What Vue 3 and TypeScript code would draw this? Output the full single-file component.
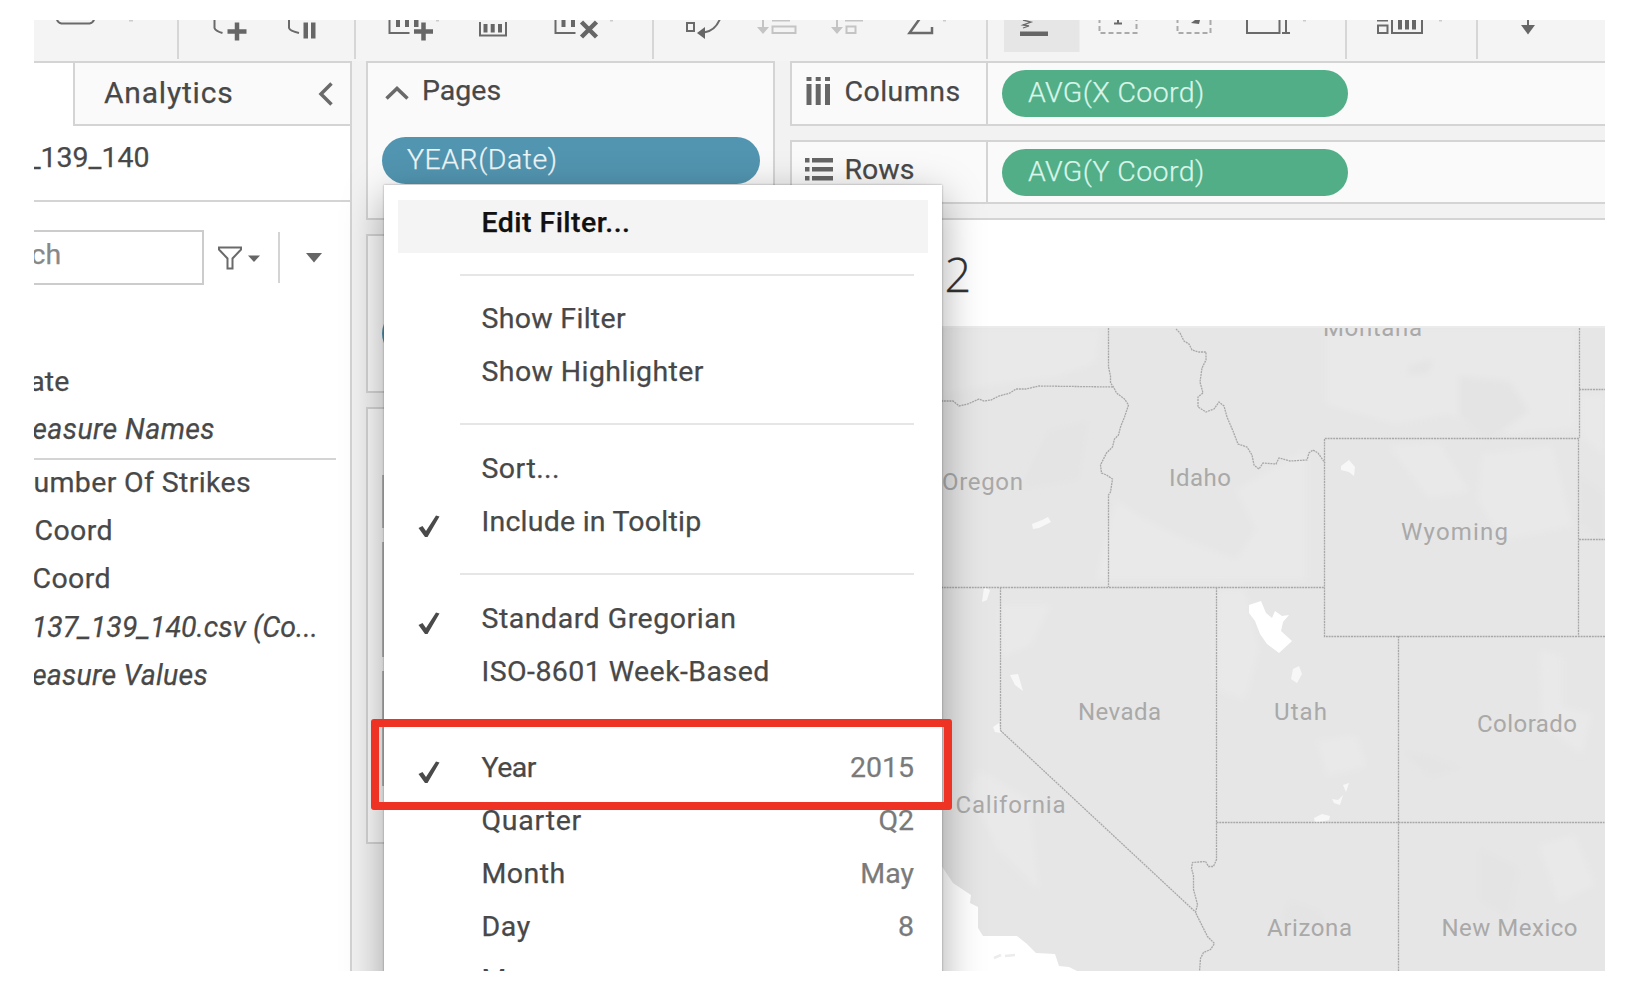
<script setup lang="ts">
interface MenuRow {
  kind: 'item' | 'rule'
  label?: string
  value?: string
  checked?: boolean
  active?: boolean
  tracking?: number
}

interface Field {
  label: string
  width: number
  tracking: number
  italic?: boolean
  ruleAfter?: boolean
}

interface Place {
  name: string
  x: number
  y: number
  width: number
}

const fields: Field[] = [
  { label: 'ate', width: 35.5, tracking: 0.1 },
  { label: 'easure Names', width: 181, tracking: 0.4, italic: true, ruleAfter: true },
  { label: 'umber Of Strikes', width: 217, tracking: 0.35 },
  { label: 'Coord', width: 79, tracking: 0.4 },
  { label: 'Coord', width: 77, tracking: 0.4 },
  { label: '137_139_140.csv (Co...', width: 284, tracking: 0, italic: true },
  { label: 'easure Values', width: 174, tracking: 0.25, italic: true },
]

const menu: MenuRow[] = [
  { kind: 'item', label: 'Edit Filter...', active: true, tracking: 0.45 },
  { kind: 'rule' },
  { kind: 'item', label: 'Show Filter', tracking: 0.3 },
  { kind: 'item', label: 'Show Highlighter', tracking: 0.4 },
  { kind: 'rule' },
  { kind: 'item', label: 'Sort...', tracking: 0.45 },
  { kind: 'item', label: 'Include in Tooltip', checked: true, tracking: 0.23 },
  { kind: 'rule' },
  { kind: 'item', label: 'Standard Gregorian', checked: true, tracking: 0.52 },
  { kind: 'item', label: 'ISO-8601 Week-Based', tracking: 0.44 },
  { kind: 'rule' },
  { kind: 'item', label: 'Year', value: '2015', checked: true, tracking: -0.5 },
  { kind: 'item', label: 'Quarter', value: 'Q2', tracking: 0.75 },
  { kind: 'item', label: 'Month', value: 'May', tracking: 0.45 },
  { kind: 'item', label: 'Day', value: '8', tracking: 0.6 },
  { kind: 'item', label: 'More' },
]

const places: Place[] = [
  { name: 'Montana', x: 1324, y: 336, width: 99 },
  { name: 'Oregon', x: 943, y: 489.5, width: 81 },
  { name: 'Idaho', x: 1170, y: 486, width: 62 },
  { name: 'Wyoming', x: 1402, y: 540, width: 107 },
  { name: 'Nevada', x: 1079, y: 720, width: 83 },
  { name: 'Utah', x: 1275, y: 720, width: 53 },
  { name: 'Colorado', x: 1478, y: 732, width: 100 },
  { name: 'California', x: 956.5, y: 812.5, width: 110 },
  { name: 'Arizona', x: 1268, y: 936, width: 85 },
  { name: 'New Mexico', x: 1442.5, y: 936, width: 136 },
]
</script>

<template>
  <main class="frame">
    <header class="toolbar">
      <svg class="tools" width="143" height="41" viewBox="34 20 143 41">
        <path d="M56.500 18q1 5 5 5.500h28q4 -.5 5-5.500" class="line" />
        <rect x="129" y="20" width="4" height="1.500" class="faint" />
      </svg>
      <i class="split"></i>
      <svg class="tools" width="175" height="41" viewBox="179 20 175 41">
        <path d="M214.500 18v10q1 3 8 5M289 18v10q1 3 10 5" class="line" />
        <path d="M237 22.500v18M227.500 31.500h19" class="heavy" />
        <path d="M303.500 22.500h4.500v16h-4.500zM311 22.500h4.500v16h-4.500z" class="solid" />
      </svg>
      <i class="split"></i>
      <svg class="tools" width="296" height="41" viewBox="356 20 296 41">
        <path d="M389.500 18v15h20M480 22v13.500h26v-13.500M555.500 18v15h20" class="line" />
        <path d="M396 18h4v9h-4zM405 18h4v9h-4zM414 18h4.500v9h-4.500zM483.500 24h4v8.500h-4zM490.700 24h4v8.500h-4zM498 24h4v8.500h-4zM561.500 18h4v9h-4zM571 18h4v9h-4z" class="solid" />
        <path d="M423.500 22.500v18M414 31.500h19M581.500 22l15 15M596.500 22l-15 15" class="heavy" />
        <path d="M436 20h3v1.500h-3zM610 20h3v1.500h-3z" class="faint" />
      </svg>
      <i class="split"></i>
      <svg class="tools" width="332" height="41" viewBox="654 20 332 41">
        <rect x="687" y="23" width="7" height="8" class="line" />
        <path d="M720 19q-5 12-16 13.500" class="line" />
        <path d="M697 33l8-6v12z" class="solid" />
        <path d="M763 18v10M772 20.500h18M772.500 26.500h23v6.500h-23zM837 18v10M845 20.500h18M846.500 26.500h9v6.500h-9z" class="pale" />
        <path d="M757 27h12l-6 7zM831 27h12l-6 7z" class="pale-solid" />
        <path d="M921 17L909.500 33h22.500v-6" class="line sigma" />
        <path d="M943 20h3v1.500h-3z" class="faint" />
      </svg>
      <i class="split"></i>
      <svg class="tools" width="357" height="41" viewBox="988 20 357 41">
        <rect x="1004" y="20" width="75.500" height="32" fill="#e6e6e6" />
        <rect x="1020" y="31.500" width="28" height="4.500" class="solid" />
        <path d="M1023 20l8 2-8 3 6 1-6 2" class="line thin" />
        <path d="M1099.500 18v15h37v-15M1177.500 18v15h33v-15" class="dashed" />
        <path d="M1118 18v5M1114 23.500h8" class="line" />
        <path d="M1191 23l8 1 1-4h-5z" class="solid" />
        <path d="M1247 18v15h32.500v-15M1286 18v15M1282 33h8" class="line" />
        <path d="M1303 20h3v1.500h-3z" class="faint" />
      </svg>
      <i class="split"></i>
      <svg class="tools" width="129" height="41" viewBox="1347 20 129 41">
        <path d="M1378 25.500h9.500v7.500h-9.500zM1377 20.500h11M1392 18v15h30v-15" class="line" />
        <path d="M1398 18h4v11.500h-4zM1405 18h4v11.500h-4zM1412 18h4v11.500h-4z" class="solid" />
        <path d="M1439 20h3v1.500h-3z" class="faint" />
      </svg>
      <i class="split"></i>
      <svg class="tools" width="127" height="41" viewBox="1478 20 127 41">
        <path d="M1528 18v10" class="line" />
        <path d="M1521 25h14l-7 9.500z" class="solid" />
      </svg>
    </header>

    <div class="body">
      <aside class="sidebar">
        <div class="tabs">
          <div class="tab-current"></div>
          <div class="tab">
            <span class="tab-name">Analytics</span>
            <svg width="16" height="24" viewBox="0 0 16 24"><path d="M13.500 1.500L3 12l10.500 10.500" class="chevron" /></svg>
          </div>
        </div>
        <div class="source"><span>_139_140</span></div>
        <div class="search-row">
          <div class="search"><span>ch</span></div>
          <svg class="funnel" width="44" height="26" viewBox="0 0 44 26">
            <path d="M2 2.500h22v2l-8.500 9v10h-5v-10L2 4.500z" class="line" />
            <path d="M31 10.500h12l-6 6.500z" class="solid" />
          </svg>
          <i class="search-split"></i>
          <svg class="caret" width="16" height="10" viewBox="0 0 16 10"><path d="M0 0h16L8 9.500z" class="solid" /></svg>
        </div>
        <ul class="fields">
          <li v-for="(field, i) in fields" :key="i" :class="{ italic: field.italic, ruled: field.ruleAfter }">
            <span :style="{ width: field.width + 'px', letterSpacing: field.tracking + 'px' }">{{ field.label }}</span>
          </li>
        </ul>
      </aside>

      <section class="cards">
        <div class="card pages">
          <div class="card-head">
            <svg width="24" height="14" viewBox="0 0 24 14"><path d="M1.500 12.500L12 2.500l10.500 10" class="chevron" /></svg>
            <span>Pages</span>
          </div>
          <div class="pill blue"><span>YEAR(Date)</span></div>
        </div>
        <div class="card filters"><div class="pill blue"></div></div>
        <div class="card marks">
          <i class="mark-type"></i>
          <i class="mark-button"></i>
          <i class="mark-button"></i>
        </div>
      </section>

      <section class="sheet">
        <div class="shelf">
          <div class="shelf-name">
            <svg width="28" height="28" viewBox="0 0 28 28">
              <path d="M1.500 0h5v4h-5zM10.700 0h5v4h-5zM20 0h5v4h-5zM1.500 7h5v21h-5zM10.700 7h5v21h-5zM20 7h5v21h-5z" class="solid" />
            </svg>
            <span class="columns">Columns</span>
          </div>
          <div class="pill green"><span>AVG(X Coord)</span></div>
        </div>
        <div class="shelf rows-shelf">
          <div class="shelf-name">
            <svg width="28" height="28" viewBox="0 0 28 28">
              <path d="M0 3h4.500v4.500H0zM0 12h4.500v4.500H0zM0 21h4.500v4.500H0zM7 3h21v4.500H7zM7 12h21v4.500H7zM7 21h21v4.500H7z" class="solid" />
            </svg>
            <span>Rows</span>
          </div>
          <div class="pill green"><span>AVG(Y Coord)</span></div>
        </div>
        <div class="view">
          <h1 class="title">2</h1>
          <svg class="map" width="815" height="645" viewBox="791 326 815 645">
            <defs>
              <filter id="relief"><feGaussianBlur stdDeviation="3" /></filter>
            </defs>
            <rect x="791" y="326" width="815" height="645" fill="#e6e6e6" />
            <g fill="#e9e9e9" filter="url(#relief)">
              <path d="M942 328h160l-6 35-40 14-60 7-54 10zM1117 500l30 20 40 20 50 20 20-30-20-40 70-40v130h-210zM1483 454l70-8 20 80-70 14-24-40zM1390 446l50-4 30 50-40 6zM1218 590h28l14 60-14 50-28-10zM980 770l50 30 10 90-40-40-30-60zM1541 650l22 6 0 50 30 8-10 40-40-30z" />
              <path d="M1327 328h250v100l-70 6-60-20-50 10-70-20zM1582 395h23v60l-23-20zM1318 740l40-4 10 30-40 10zM1540 845l36-10 20 50-36 18zM1002 605l50 0-20 40-30 12z" />
            </g>
            <g fill="#e4e4e4" filter="url(#relief)">
              <path d="M1050 430l40-10-10 60-60 10zM1460 376l50 5 20 30-40 30-30-24zM1580 475l25 18v50l-25-20zM1410 365l25-6-6 14-20 2zM1402 750l30 6 30 12-30 10zM1480 848l40 20-10 50-30-18zM1290 900l30 10 10 20-50-8z" />
            </g>
            <g fill="#fff">
              <path d="M791 840l151 25 12 18 18 12-1 8 8 4v21l5 8h34l10 8 9 9 19 1 4 12 10 1 8 4H791z" />
              <path d="M1250 605l12-4 5 12 6 5 3-7 7 5 7-1-6 7-2 9 11 10-13 12-12-9-7-10-5-13-6-8z" />
            </g>
            <g fill="#f7f7f7">
              <path d="M1294 669l6-3 3 8-5 9-6-4zM1033 524l10-4 6-3 3 5-12 6-6 1zM985 587l6 3-3 10-5 2zM1011 675l8-1 5 17-8-6zM994 727l6-4 2 10-6-1zM1342 466l8-6 6 7-1 9-5-4-8-2zM1333 799l6 1 5-5-3 10-6-2zM1344 785l6-2-3 9zM1315 818l8-4 8 2-1 4-14 3z" />
            </g>
            <path d="M995 958l7-3M1006 956l10-1" stroke="#ececec" stroke-width="2.500" />
            <g class="border">
              <path d="M942 401h12l6 5 9-2 11-5 5 2 7-1 8-4 11-3 6-4h10l13-3 74 1" />
              <path d="M1109.500 328v39l2 9v7l3 4 3 6 8 6 4 6-4 12-4 10-2 8-4 4-2 8-6 6-6 12 1 8 5 2 6 4-2 13-2 3v92" />
              <path d="M1177 329l4 4 4 8 5 3 3 6 7 2h7v8l-4 8-2 14 3 11-5 4v10l8 5 8-3 5-7 5 4 3 11 6 14 5 13 9 3 5 8 2 10 5 4 4-6 13 1 3-6 11 3 17-1 2-7 4-3 5 3 7 10" />
              <path d="M942 587.500h384M1001.500 587.500v143l195.500 182M1217.500 587.500v272l-3 7h-5l-3-5-13 1-1 6 2 7v14l4 15-2 8 7 14 5 10 7 7-4 6-7 3-3 6-1 13" />
              <path d="M1217.500 822.500h388M1606 636.500h-280.500v-198h254v198M1399.500 636v335M1580.500 328v110M1580 389.500h26M1580 539.500h26" />
            </g>
            <rect x="791" y="326" width="815" height="2" fill="#ebebeb" />
            <svg x="791" y="328" width="815" height="643" viewBox="791 328 815 643">
              <text v-for="place in places" :key="place.name" :x="place.x" :y="place.y" :textLength="place.width" class="place">{{ place.name }}</text>
            </svg>
          </svg>
        </div>
      </section>
    </div>

    <nav class="menu">
      <template v-for="(row, i) in menu" :key="i">
        <div v-if="row.kind === 'rule'" class="menu-rule"></div>
        <div v-else class="menu-item" :class="{ active: row.active }">
          <span class="check">
            <svg v-if="row.checked" width="22" height="23" viewBox="0 0 22 23"><path d="M0.500 13l4-2 3.500 5L18 0.500l3.500 1L9.500 22H7z" fill="#4a4a4a" /></svg>
          </span>
          <span class="label" :style="{ letterSpacing: (row.tracking ?? 0) + 'px' }">{{ row.label }}</span>
          <span class="value">{{ row.value }}</span>
        </div>
      </template>
    </nav>
    <div class="callout"></div>
  </main>
</template>

<style>
body {
  margin: 0;
  background: #fff;
}
</style>

<style scoped>
.frame {
  position: relative;
  box-sizing: border-box;
  width: 1571px;
  height: 951px;
  margin: 20px 0 0 34px;
  overflow: hidden;
  background: #f2f2f2;
  color: #484848;
  font: 28.5px/46px Roboto, "Liberation Sans", sans-serif;
  -webkit-text-stroke: 0.25px currentColor;
}
span {
  white-space: nowrap;
}
.toolbar {
  display: flex;
  height: 41px;
  background: #f4f4f4;
}
.tools,
.split {
  flex: none;
}
.split {
  width: 2px;
  height: 39px;
  background: #d6d6d6;
}
.line {
  fill: none;
  stroke: #6a6a6a;
  stroke-width: 2;
}
.thin {
  stroke-width: 1.3;
}
.sigma {
  stroke-width: 2.5;
}
.heavy {
  fill: none;
  stroke: #666;
  stroke-width: 4.5;
}
.solid {
  fill: #666;
}
.faint {
  fill: #ccc;
}
.pale {
  fill: none;
  stroke: #c4c4c4;
  stroke-width: 2;
}
.pale-solid {
  fill: #c4c4c4;
}
.dashed {
  fill: none;
  stroke: #aaa;
  stroke-width: 2;
  stroke-dasharray: 5 3;
}
.chevron {
  fill: none;
  stroke: #6a6a6a;
  stroke-width: 3.5;
}
.body {
  display: flex;
  height: 910px;
}
.sidebar {
  box-sizing: border-box;
  flex: none;
  width: 318px;
  border-top: 2px solid #d4d4d4;
  border-right: 2px solid #d4d4d4;
  background: #fff;
}
.tabs {
  display: flex;
  height: 63px;
}
.tab-current {
  width: 39px;
}
.tab {
  box-sizing: border-box;
  display: flex;
  flex: 1;
  align-items: center;
  justify-content: space-between;
  padding: 0 16px 0 29px;
  border-bottom: 2px solid #d4d4d4;
  border-left: 2px solid #d4d4d4;
  background: #fafafa;
  font-size: 30px;
  letter-spacing: 0.8px;
}
.tab-name {
  margin-top: -1px;
}
.source {
  box-sizing: border-box;
  display: flex;
  justify-content: flex-end;
  width: 115.500px;
  height: 74px;
  padding-top: 9px;
}
.search-row {
  display: flex;
  height: 83px;
  padding-top: 28px;
  border-top: 2px solid #d4d4d4;
}
.search {
  box-sizing: border-box;
  width: 170px;
  height: 55px;
  border: 2px solid #ccc;
  border-left: 0;
  color: #888;
}
.search span {
  display: block;
  margin: 0 0 0 -3.500px;
}
.funnel {
  margin: 15px 0 0 13px;
}
.search-split {
  width: 2px;
  height: 51px;
  margin: 2px 0 0 17px;
  background: #d4d4d4;
}
.caret {
  margin: 23px 0 0 26px;
}
.fields {
  margin: 0;
  padding: 44.500px 0 0;
  list-style: none;
}
.fields li {
  display: flex;
  height: 48.3px;
  line-height: 48.3px;
}
.fields li span {
  display: flex;
  flex: none;
  justify-content: flex-end;
}
.fields .italic {
  font-style: italic;
}
.fields .ruled {
  width: 302px;
  height: 52px;
  margin-bottom: -1px;
  border-bottom: 2px solid #d4d4d4;
}
.cards {
  display: flex;
  flex: none;
  flex-direction: column;
  gap: 14px;
  width: 409px;
  margin-left: 14px;
}
.card {
  box-sizing: border-box;
  border: 2px solid #d4d4d4;
  background: #fafafa;
}
.pages {
  height: 159px;
}
.filters {
  height: 159px;
  padding-top: 74px;
}
.marks {
  height: 437px;
  padding: 66px 14px 0;
}
.mark-type,
.mark-button {
  display: block;
  height: 53px;
  border-left: 2px solid #bbb;
}
.mark-button {
  height: 115px;
  margin-top: 14px;
}
.card-head {
  display: flex;
  align-items: center;
  gap: 13px;
  height: 54px;
  padding-left: 17px;
}
.card-head span {
  margin-top: 2px;
}
.card-head svg {
  margin-top: 6px;
}
.pill {
  box-sizing: border-box;
  width: 378px;
  height: 46.500px;
  padding-left: 26px;
  border-radius: 24px;
  color: #eef6f7;
  font-weight: 300;
  letter-spacing: 0.5px;
}
.blue {
  margin: 20px 0 0 14px;
  padding-left: 25px;
  background: #5295b0;
}
.filters .blue {
  margin-top: 0;
}
.green {
  width: 346px;
  margin: 7px 0 0 14px;
  background: #51ae86;
  color: #d9f5ea;
  letter-spacing: 0.4px;
}
.sheet {
  flex: none;
  width: 815px;
  margin-left: 15px;
}
.shelf {
  box-sizing: border-box;
  display: flex;
  height: 65px;
  border: 2px solid #d4d4d4;
  border-right: 0;
  background: #fafafa;
}
.rows-shelf {
  height: 64px;
  margin-top: 14px;
}
.shelf-name {
  box-sizing: border-box;
  display: flex;
  flex: none;
  gap: 11.500px;
  width: 196px;
  padding: 6px 0 0 13px;
  border-right: 2px solid #d4d4d4;
}
.rows-shelf .shelf-name {
  padding-top: 5px;
}
.shelf-name svg {
  margin-top: 8px;
}
.columns {
  letter-spacing: 0.45px;
}
.view {
  height: 751px;
  margin-top: 14px;
  border-top: 2px solid #d4d4d4;
  background: #fff;
}
.title {
  height: 106px;
  margin: 0;
  padding-left: 154.500px;
  color: #333;
  font: 300 47px/109px "Open Sans", sans-serif;
}
.map {
  display: block;
}
.border {
  fill: none;
  stroke: #a8a8a8;
  stroke-width: 1.3;
  stroke-dasharray: 2 0.8;
}
.place {
  fill: #a9a9a9;
  font-size: 24px;
}
.menu {
  position: absolute;
  top: 165px;
  left: 350px;
  box-sizing: border-box;
  width: 558px;
  height: 840px;
  padding: 14.500px 14px 0;
  background: #fff;
  box-shadow: 0 0 2px rgba(0, 0, 0, 0.35), 0 12px 38px rgba(0, 0, 0, 0.34);
}
.menu-item {
  display: flex;
  height: 53px;
  padding-right: 14px;
  line-height: 45px;
}
.active {
  background: #f4f4f4;
  color: #111;
  font-weight: 500;
}
.check {
  width: 63.500px;
  padding: 16px 0 0 20px;
  line-height: 0;
}
.label {
  flex: 1;
}
.value {
  color: #7a7a7a;
}
.menu-rule {
  height: 2px;
  margin: 21.300px 14px 20.400px 62px;
  background: #e6e6e6;
}
.callout {
  position: absolute;
  top: 699px;
  left: 337px;
  box-sizing: border-box;
  width: 581px;
  height: 91px;
  border: 8px solid #ee3224;
  border-radius: 3px;
}
</style>
